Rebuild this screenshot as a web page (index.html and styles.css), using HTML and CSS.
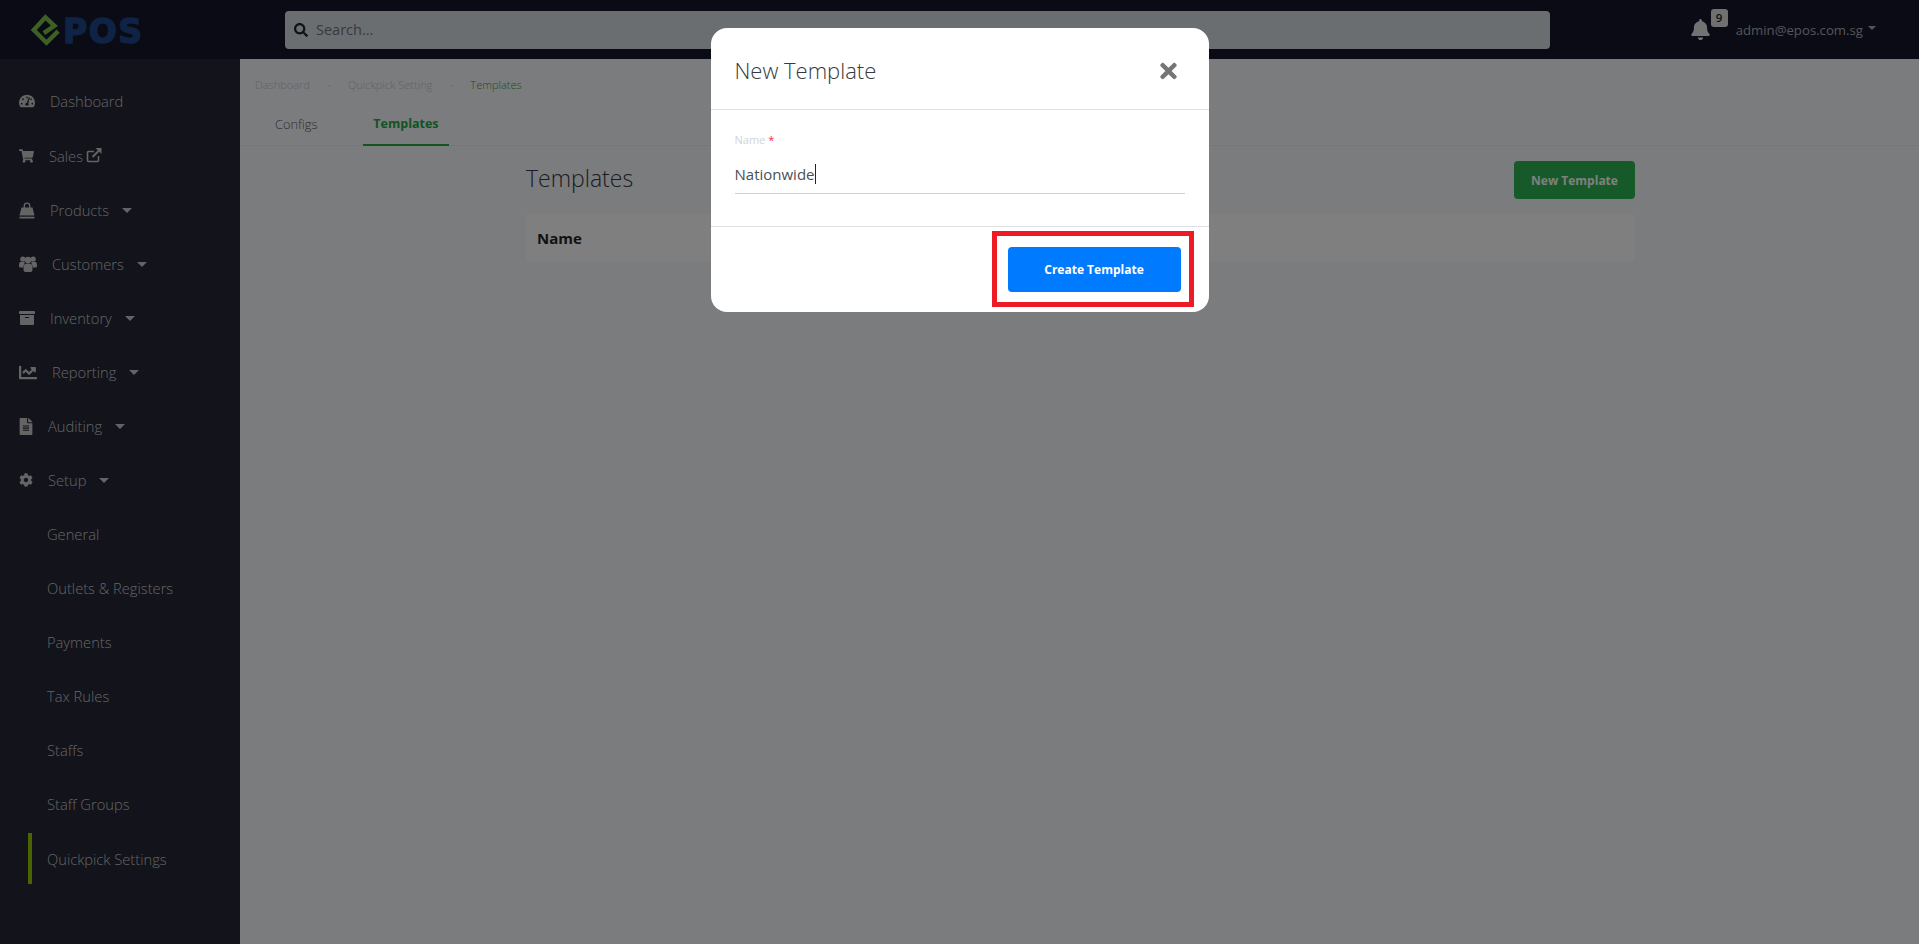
FILE: index.html
```html
<!doctype html>
<html lang="en">
    <head>
        <meta charset="UTF-8" />
        <title>Templates</title>
        <link rel="stylesheet" href="styles.css">
    </head>
    <body>
        <div class="top-bar">
            <div class="logo">
                <svg class="logo-mark" viewBox="0 0 34 34" width="36" height="36">
                    <path d="M27.5 18 L16.5 29 L4.5 17 L15.5 5 L24 13 L14 20" fill="none" stroke="#7cc04a" stroke-width="4.2" stroke-linejoin="miter" />
                </svg>
                <span class="logo-text">POS</span>
            </div>
            <div class="search">
                <svg class="search-icon" viewBox="0 0 512 512" width="14" height="14"><path d="M505 442.7L405.3 343c-4.5-4.5-10.6-7-17-7H372c27.6-35.3 44-79.7 44-128C416 93.1 322.9 0 208 0S0 93.1 0 208s93.1 208 208 208c48.3 0 92.7-16.4 128-44v16.3c0 6.4 2.5 12.5 7 17l99.7 99.7c9.4 9.4 24.6 9.4 33.9 0l28.3-28.3c9.4-9.4 9.4-24.6.1-34zM208 336c-70.7 0-128-57.2-128-128 0-70.7 57.2-128 128-128 70.7 0 128 57.2 128 128 0 70.7-57.2 128-128 128z" /></svg>
                <span>Search...</span>
            </div>
            <div class="bell">
                <svg viewBox="0 0 448 512" width="19" height="21"><path d="M224 512c35.32 0 63.97-28.65 63.97-64H160.03c0 35.35 28.65 64 63.97 64zm215.39-149.71c-19.32-20.76-55.47-51.99-55.47-154.29 0-77.7-54.48-139.9-127.94-155.16V32c0-17.67-14.32-32-31.98-32s-31.98 14.33-31.98 32v20.84C118.56 68.1 64.08 130.3 64.08 208c0 102.3-36.15 133.53-55.47 154.29-6 6.45-8.66 14.16-8.61 21.71.11 16.4 12.98 32 32.1 32h383.8c19.12 0 32-15.6 32.1-32 .05-7.55-2.61-15.27-8.61-21.71z" /></svg>
                <span class="badge">9</span>
            </div>
            <div class="user">admin@epos.com.sg<span class="user-caret"></span></div>
        </div>
        <div class="layout">
            <div class="sidebar">
                <a class="nav-item">
                    <svg viewBox="0 0 576 512" width="16" height="16"><path d="M288 32C128.94 32 0 160.94 0 320c0 52.8 14.25 102.26 39.06 144.8 5.61 9.62 16.3 15.2 27.44 15.2h443c11.14 0 21.83-5.58 27.44-15.2C561.75 422.26 576 372.8 576 320c0-159.06-128.94-288-288-288zm0 64c14.71 0 26.58 10.13 30.32 23.65-1.11 2.26-2.64 4.23-3.45 6.67l-9.22 27.67c-5.13 3.49-10.97 6.01-17.64 6.01-17.67 0-32-14.33-32-32S270.33 96 288 96zM96 384c-17.67 0-32-14.33-32-32s14.33-32 32-32 32 14.33 32 32-14.33 32-32 32zm48-160c-17.67 0-32-14.33-32-32s14.33-32 32-32 32 14.33 32 32-14.33 32-32 32zm246.77-72.41l-61.33 184C343.13 347.33 352 364.54 352 384c0 11.72-3.38 22.55-8.88 32H232.88c-5.5-9.45-8.88-20.28-8.88-32 0-33.94 26.5-61.43 59.9-63.59l61.34-184.01c4.17-12.56 17.73-19.45 30.36-15.17 12.57 4.19 19.35 17.77 15.17 30.36zm14.66 57.2l15.52-46.55c3.47-1.29 7.13-2.23 11.05-2.23 17.67 0 32 14.33 32 32s-14.33 32-32 32c-11.38-.01-20.89-6.28-26.57-15.22zM480 384c-17.67 0-32-14.33-32-32s14.33-32 32-32 32 14.33 32 32-14.33 32-32 32z" /></svg>
                    Dashboard
                </a>
                <a class="nav-item">
                    <svg viewBox="0 0 576 512" width="15" height="14"><path d="M528.12 301.319l47.273-208C578.806 78.301 567.391 64 551.99 64H159.208l-9.166-44.81C147.758 8.021 137.93 0 126.529 0H24C10.745 0 0 10.745 0 24v16c0 13.255 10.745 24 24 24h69.883l70.248 343.435C147.325 417.1 136 435.222 136 456c0 30.928 25.072 56 56 56s56-25.072 56-56c0-15.674-6.447-29.835-16.824-40h209.647C430.447 426.165 424 440.326 424 456c0 30.928 25.072 56 56 56s56-25.072 56-56c0-22.172-12.888-41.332-31.579-50.405l5.517-24.276c3.413-15.018-8.002-29.319-23.403-29.319H218.117l-6.545-32h293.145c11.206 0 20.92-7.754 23.403-18.681z" /></svg>
                    Sales
                    <svg class="ext-icon" viewBox="0 0 16 16" width="16" height="16"><path d="M12.5 9v4.5a1 1 0 0 1-1 1h-9a1 1 0 0 1-1-1v-8a1 1 0 0 1 1-1H8" fill="none" stroke-width="1.6" /><path d="M6.5 10 L13 3.5" fill="none" stroke-width="2" /><path d="M9.5 1 H15.5 V7 Z" stroke="none" /></svg>
                </a>
                <a class="nav-item">
                    <svg viewBox="0 0 16 17" width="16" height="17">
                        <path d="M5.3 6.5 V3.8 a2.7 2.7 0 0 1 5.4 0 V6.5" fill="none" stroke="#c8c8c8" stroke-width="1.4" />
                        <path d="M2.5 5.5 H13.5 L15.5 13.5 H0.5 Z" />
                        <path d="M0.5 14.7 H15.5 V16.5 H0.5 Z" />
                    </svg>
                    Products<span class="caret"></span>
                </a>
                <a class="nav-item">
                    <svg viewBox="0 0 18 16" width="18" height="16">
                        <circle cx="3.8" cy="3" r="2.6" />
                        <circle cx="14.2" cy="3" r="2.6" />
                        <path d="M0 10 V8.2 A2.4 2.4 0 0 1 2.4 5.8 H6 L4 11.5 H1.5 A1.5 1.5 0 0 1 0 10 Z" />
                        <path d="M18 10 V8.2 A2.4 2.4 0 0 0 15.6 5.8 H12 L14 11.5 H16.5 A1.5 1.5 0 0 0 18 10 Z" />
                        <circle cx="9" cy="4" r="3.2" />
                        <path d="M4.5 14 V11 A3.6 3.6 0 0 1 8.1 7.4 H9.9 A3.6 3.6 0 0 1 13.5 11 V14 A2 2 0 0 1 11.5 16 H6.5 A2 2 0 0 1 4.5 14 Z" />
                    </svg>
                    Customers<span class="caret"></span>
                </a>
                <a class="nav-item">
                    <svg viewBox="0 0 512 512" width="16" height="16"><path d="M32 448c0 17.7 14.3 32 32 32h384c17.7 0 32-14.3 32-32V160H32v288zm160-212c0-6.6 5.4-12 12-12h104c6.6 0 12 5.4 12 12v8c0 6.6-5.4 12-12 12H204c-6.6 0-12-5.4-12-12v-8zM480 32H32C14.3 32 0 46.3 0 64v48c0 8.8 7.2 16 16 16h480c8.8 0 16-7.2 16-16V64c0-17.7-14.3-32-32-32z" /></svg>
                    Inventory<span class="caret"></span>
                </a>
                <a class="nav-item">
                    <svg viewBox="0 0 512 512" width="18" height="19"><path d="M496 384H64V80c0-8.84-7.16-16-16-16H16C7.16 64 0 71.16 0 80v336c0 17.67 14.33 32 32 32h464c8.84 0 16-7.16 16-16v-32c0-8.84-7.16-16-16-16zM464 96H345.94c-21.38 0-32.09 25.85-16.97 40.97l32.4 32.4L288 242.75l-73.37-73.37c-12.5-12.5-32.76-12.5-45.25 0l-68.69 68.69c-6.25 6.25-6.25 16.38 0 22.63l22.62 22.62c6.25 6.25 16.38 6.25 22.63 0L192 237.25l73.37 73.37c12.5 12.5 32.76 12.5 45.25 0l96-96 32.4 32.4c15.12 15.12 40.97 4.41 40.97-16.97V112c.01-8.84-7.15-16-15.99-16z" /></svg>
                    Reporting<span class="caret"></span>
                </a>
                <a class="nav-item">
                    <svg viewBox="0 0 384 512" width="14" height="17"><path d="M224 136V0H24C10.7 0 0 10.7 0 24v464c0 13.3 10.7 24 24 24h336c13.3 0 24-10.7 24-24V160H248c-13.2 0-24-10.8-24-24zm64 236c0 6.6-5.4 12-12 12H108c-6.6 0-12-5.4-12-12v-8c0-6.6 5.4-12 12-12h168c6.6 0 12 5.4 12 12v8zm0-64c0 6.6-5.4 12-12 12H108c-6.6 0-12-5.4-12-12v-8c0-6.6 5.4-12 12-12h168c6.6 0 12 5.4 12 12v8zm0-72v8c0 6.6-5.4 12-12 12H108c-6.6 0-12-5.4-12-12v-8c0-6.6 5.4-12 12-12h168c6.6 0 12 5.4 12 12zm96-114.1v6.1H256V0h6.1c6.4 0 12.5 2.5 17 7l97.9 98c4.5 4.5 7 10.6 7 16.9z" /></svg>
                    Auditing<span class="caret"></span>
                </a>
                <a class="nav-item">
                    <svg viewBox="0 0 512 512" width="14" height="14"><path d="M487.4 315.7l-42.6-24.6c4.3-23.2 4.3-47 0-70.2l42.6-24.6c4.9-2.8 7.1-8.6 5.5-14-11.1-35.6-30-67.8-54.7-94.6-3.8-4.1-10-5.1-14.8-2.3L380.8 110c-17.9-15.4-38.5-27.3-60.8-35.1V25.8c0-5.6-3.9-10.5-9.4-11.7-36.7-8.2-74.3-7.8-109.2 0-5.5 1.2-9.4 6.1-9.4 11.7V75c-22.2 7.9-42.8 19.8-60.8 35.1L88.7 85.5c-4.9-2.8-11-1.9-14.8 2.3-24.7 26.7-43.6 58.9-54.7 94.6-1.7 5.4.6 11.2 5.5 14L67.3 221c-4.3 23.2-4.3 47 0 70.2l-42.6 24.6c-4.9 2.8-7.1 8.6-5.5 14 11.1 35.6 30 67.8 54.7 94.6 3.8 4.1 10 5.1 14.8 2.3l42.6-24.6c17.9 15.4 38.5 27.3 60.8 35.1v49.2c0 5.6 3.9 10.5 9.4 11.7 36.7 8.2 74.3 7.8 109.2 0 5.5-1.2 9.4-6.1 9.4-11.7v-49.2c22.2-7.9 42.8-19.8 60.8-35.1l42.6 24.6c4.9 2.8 11 1.9 14.8-2.3 24.7-26.7 43.6-58.9 54.7-94.6 1.5-5.5-.7-11.3-5.6-14.1zM256 336c-44.1 0-80-35.9-80-80s35.9-80 80-80 80 35.9 80 80-35.9 80-80 80z" /></svg>
                    Setup<span class="caret"></span>
                </a>
                <a class="nav-sub">General</a>
                <a class="nav-sub">Outlets &amp; Registers</a>
                <a class="nav-sub">Payments</a>
                <a class="nav-sub">Tax Rules</a>
                <a class="nav-sub">Staffs</a>
                <a class="nav-sub">Staff Groups</a>
                <a class="nav-sub active">Quickpick Settings</a>
            </div>
            <div class="main">
                <div class="breadcrumb">
                    <span>Dashboard</span><span class="sep">-</span>
                    <span>Quickpick Setting</span><span class="sep">-</span>
                    <span class="current">Templates</span>
                </div>
                <div class="tabs">
                    <a class="tab">Configs</a>
                    <a class="tab active">Templates</a>
                </div>
                <div class="content">
                    <div class="content-head">
                        <h1>Templates</h1>
                        <button class="btn-green">New Template</button>
                    </div>
                    <div class="table-head">Name</div>
                </div>
            </div>
        </div>

        <div class="overlay">
            <div class="modal">
                <div class="modal-header">
                    <h2>New Template</h2>
                    <svg class="close" viewBox="0 0 352 512" width="17" height="24"><path d="M242.72 256l100.07-100.07c12.28-12.28 12.28-32.19 0-44.48l-22.24-22.24c-12.28-12.28-32.19-12.28-44.48 0L176 189.28 75.93 89.21c-12.28-12.28-32.19-12.28-44.48 0L9.21 111.45c-12.28 12.28-12.28 32.19 0 44.48L109.28 256 9.21 356.07c-12.28 12.28-12.28 32.19 0 44.48l22.24 22.24c12.28 12.28 32.2 12.28 44.48 0L176 322.72l100.07 100.07c12.28 12.28 32.2 12.28 44.48 0l22.24-22.24c12.28-12.28 12.28-32.19 0-44.48L242.72 256z" /></svg>
                </div>
                <div class="modal-body">
                    <div class="field-label">Name <span class="required">*</span></div>
                    <div class="field-input">Nationwide<span class="text-cursor"></span></div>
                </div>
                <div class="modal-footer">
                    <button class="btn-blue">Create Template</button>
                </div>
                <div class="highlight"></div>
            </div>
        </div>
    </body>
</html>
```

FILE: styles.css
```css
* {
    box-sizing: border-box;
}
body {
    margin: 0;
    height: 944px;
    overflow: hidden;
    font-family: "Open Sans", "Noto Sans", sans-serif;
    background-color: #f6f8fc;
    color: #212529;
}
.top-bar {
    display: flex;
    align-items: center;
    height: 59px;
    padding-right: 43px;
    background-color: #141628;
}
.logo {
    display: flex;
    align-items: center;
    width: 285px;
    padding-left: 29px;
}
.logo-mark {
    flex-shrink: 0;
}
.logo-text {
    margin: 3px 0 0 -2px;
    font-family: "DejaVu Sans", sans-serif;
    font-size: 33px;
    font-weight: 700;
    line-height: 1;
    letter-spacing: 1.5px;
    color: #1c468c;
    -webkit-text-stroke: 1.5px #1c468c;
}
.search {
    display: flex;
    align-items: center;
    gap: 8px;
    width: 1265px;
    height: 38px;
    padding-left: 9px;
    border-radius: 4px;
    background-color: #d6dce0;
    color: #6c757d;
    font-size: 14.5px;
}
.search-icon {
    fill: #212529;
}
.bell {
    position: relative;
    display: flex;
    margin-left: auto;
    fill: #e4e4e4;
}
.badge {
    position: absolute;
    top: -10px;
    left: 20px;
    width: 17px;
    height: 18px;
    border-radius: 3px;
    background-color: #e0e0e0;
    color: #212529;
    font-size: 11.5px;
    font-weight: 600;
    line-height: 18px;
    text-align: center;
}
.user {
    display: flex;
    align-items: center;
    margin-left: 26px;
    color: #a8acb4;
    font-size: 13.2px;
}
.user-caret {
    margin-left: 5px;
    margin-top: -3px;
    border-top: 4px solid #a8acb4;
    border-left: 4px solid transparent;
    border-right: 4px solid transparent;
}
.layout {
    display: flex;
    height: 885px;
}
.sidebar {
    flex: 0 0 240px;
    padding-top: 15px;
    background-color: #242636;
}
.nav-item,
.nav-sub {
    display: flex;
    align-items: center;
    height: 54px;
    color: #c8c8c8;
    font-size: 14.7px;
    font-weight: 300;
}
.nav-item:nth-child(2) {
    margin-top: 1px;
}
.nav-item {
    padding-left: 19px;
}
.nav-item > svg:first-child {
    margin-right: 15px;
    fill: #c8c8c8;
}
.ext-icon {
    margin-left: 3px;
    margin-top: -3px;
    fill: #c8c8c8;
    stroke: #c8c8c8;
}
.caret {
    margin-left: 13px;
    border-top: 5px solid #c8c8c8;
    border-left: 5px solid transparent;
    border-right: 5px solid transparent;
}
.nav-sub {
    padding-left: 47px;
}
.nav-sub.active {
    height: 51px;
    margin: 2px 0 1px 28px;
    padding-left: 15px;
    border-left: 4px solid #98c800;
}
.main {
    flex: 1;
}
.breadcrumb {
    display: flex;
    align-items: center;
    height: 50px;
    padding: 0 0 0 15px;
    color: #c4c6cc;
    font-size: 11px;
    font-weight: 300;
}
.breadcrumb .sep {
    width: 38px;
    text-align: center;
}
.breadcrumb .current {
    color: #2e9e4a;
}
.tabs {
    display: flex;
    height: 37px;
    padding-left: 25px;
    border-bottom: 1px solid #eceef2;
}
.tab {
    padding: 6px 10px 0;
    color: #5c6066;
    font-size: 12.8px;
    font-weight: 300;
}
.tab.active {
    margin-left: 36px;
    border-bottom: 2px solid #28a745;
    margin-bottom: -1px;
    color: #28a745;
    font-size: 12.5px;
    font-weight: 700;
}
.content {
    width: 1109px;
    margin-left: 286px;
    padding-top: 15px;
}
.content-head {
    display: flex;
    align-items: center;
    justify-content: space-between;
    height: 38px;
}
.content-head h1 {
    margin: 0 0 5px;
    font-size: 23px;
    font-weight: 300;
    color: #343a40;
}
.btn-green {
    width: 121px;
    height: 38px;
    border: none;
    border-radius: 4px;
    background-color: #2bb550;
    color: #fff;
    font-family: inherit;
    font-size: 12px;
    font-weight: 700;
}
.table-head {
    display: flex;
    align-items: center;
    height: 48px;
    margin-top: 15px;
    padding-left: 11px;
    border-radius: 4px;
    background-color: #fefefe;
    color: #212529;
    font-size: 15px;
    font-weight: 700;
}
.overlay {
    position: fixed;
    top: 0;
    left: 0;
    width: 100%;
    height: 100%;
    display: flex;
    justify-content: center;
    align-items: flex-start;
    padding-top: 28px;
    background: rgba(0, 0, 0, 0.5);
}
.modal {
    position: relative;
    width: 498px;
    height: 284px;
    border-radius: 16px;
    background-color: #fff;
}
.modal-header {
    display: flex;
    align-items: center;
    justify-content: space-between;
    height: 82px;
    padding: 2px 32px 0 24px;
    border-bottom: 1px solid #dee2e6;
}
.modal-header h2 {
    margin: 0;
    color: #343a40;
    font-size: 22px;
    font-weight: 300;
}
.close {
    margin-top: 2px;
    fill: #757575;
}
.modal-body {
    height: 117px;
    padding: 22px 24px 0;
    border-bottom: 1px solid #dee2e6;
}
.field-label {
    color: #cfd4da;
    font-size: 11px;
    line-height: 15px;
}
.required {
    color: #f0304a;
}
.field-input {
    display: flex;
    align-items: center;
    height: 38px;
    margin-top: 9px;
    padding-bottom: 2px;
    border-bottom: 1px solid #ced4da;
    color: #495057;
    font-size: 15px;
}
.text-cursor {
    width: 1px;
    height: 20px;
    background-color: #212529;
}
.modal-footer {
    display: flex;
    justify-content: flex-end;
    padding: 20px 28px 0 0;
}
.btn-blue {
    width: 173px;
    height: 45px;
    border: none;
    border-radius: 4px;
    background-color: #007bff;
    color: #fff;
    font-family: inherit;
    font-size: 12px;
    font-weight: 700;
}
.highlight {
    position: absolute;
    top: 203px;
    left: 281px;
    width: 202px;
    height: 76px;
    border: 5px solid #ed1c24;
}
```
